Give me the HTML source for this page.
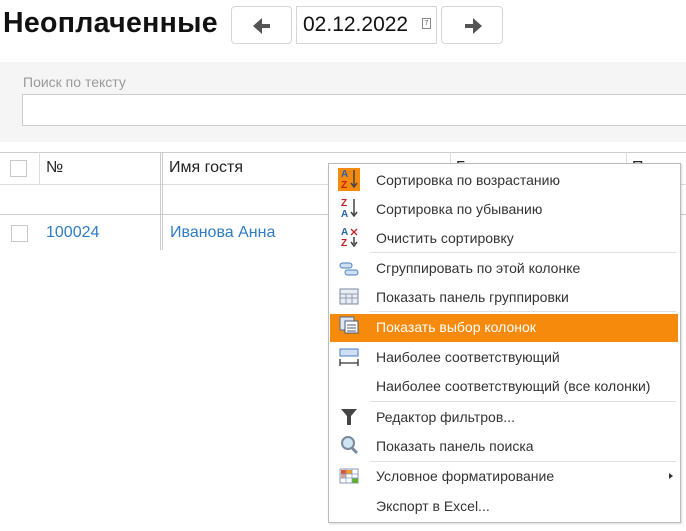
<!DOCTYPE html>
<html><head><meta charset="utf-8"><style>
*{box-sizing:border-box;margin:0;padding:0}
body{width:686px;height:531px;overflow:hidden;background:#fff;font-family:"Liberation Sans","DejaVu Sans",sans-serif;position:relative;color:#222}
.a{position:absolute}
.btn{border:1px solid #d6d6d6;border-radius:4px;background:#fff}
.cb{width:17px;height:17px;border:1px solid #c8c8c8;background:#fff;position:absolute}
.mi{position:absolute;left:376px;font-size:14px;color:#333;line-height:18px}
.sep{position:absolute;left:370px;width:306px;height:1px;background:#e0e0e0}
.ic{position:absolute;left:338px}
</style></head><body>
<div class="a" style="left:3px;top:7px;font-size:28.5px;font-weight:bold;color:#111;letter-spacing:.3px">Неоплаченные</div>
<div class="a btn" style="left:231px;top:6px;width:61px;height:38px"><svg width="61" height="38"><path d="M23 19h15" stroke="#555" stroke-width="4"/><path d="M21 19l9-8v16z" fill="#555"/></svg></div>
<div class="a" style="left:296px;top:6px;width:141px;height:38px;border:1px solid #d6d6d6;background:#fff"><span class="a" style="left:6px;top:6px;font-size:21px;color:#111">02.12.2022</span><span class="a" style="left:125px;top:11px;width:9px;height:11px;border:1px solid #888;font-size:7px;text-align:center;line-height:9px;color:#555">7</span></div>
<div class="a btn" style="left:441px;top:6px;width:62px;height:38px"><svg width="62" height="38"><path d="M23 19h15" stroke="#555" stroke-width="4"/><path d="M40 19l-9-8v16z" fill="#555"/></svg></div>
<div class="a" style="left:0;top:62px;width:686px;height:80px;background:#f5f5f5"></div>
<div class="a" style="left:23px;top:74px;font-size:14px;color:#999">Поиск по тексту</div>
<div class="a" style="left:22px;top:94px;width:670px;height:32px;border:1px solid #ccc;background:#fff"></div>
<!-- table -->
<div class="a" style="left:0;top:152px;width:686px;height:1px;background:#ccc"></div>
<div class="a" style="left:0;top:184px;width:686px;height:1px;background:#ddd"></div>
<div class="a" style="left:0;top:214px;width:686px;height:1px;background:#ccc"></div>
<div class="a" style="left:39px;top:152px;width:1px;height:32px;background:#ddd"></div>
<div class="a" style="left:160px;top:152px;width:1px;height:98px;background:#ccc"></div>
<div class="a" style="left:162px;top:152px;width:1px;height:98px;background:#ccc"></div>
<div class="a" style="left:450px;top:152px;width:1px;height:32px;background:#ddd"></div>
<div class="a" style="left:626px;top:152px;width:1px;height:32px;background:#ddd"></div>
<div class="cb" style="left:10px;top:160px"></div>
<div class="a" style="left:46px;top:159px;font-size:16px">№</div>
<div class="a" style="left:169px;top:159px;font-size:16px">Имя гостя</div>
<div class="a" style="left:456px;top:159px;font-size:16px">Гость</div>
<div class="a" style="left:632px;top:159px;font-size:16px">Пол</div>
<div class="cb" style="left:11px;top:225px"></div>
<div class="a" style="left:46px;top:224px;font-size:16px;color:#2f7bc4">100024</div>
<div class="a" style="left:170px;top:224px;font-size:16px;color:#2f7bc4">Иванова Анна</div>
<!-- menu -->
<div class="a" style="left:328px;top:163px;width:353px;height:360px;background:#fff;border:1px solid #bbb;box-shadow:1px 1px 2px rgba(0,0,0,.15)"></div>
<div class="a" style="left:330px;top:314px;width:348px;height:28px;background:#f68a0d"></div>
<div class="sep" style="top:252px"></div><div class="sep" style="top:311px"></div><div class="sep" style="top:401px"></div><div class="sep" style="top:461px"></div>
<div class="ic" style="top:168px;width:22px;height:23px;background:#f68a0d"></div>
<svg class="a" style="left:338px;top:167px" width="24" height="340" font-family="Liberation Sans" font-weight="bold" font-size="10">
<text x="3" y="10" fill="#2a62b0">A</text><text x="3" y="21" fill="#c02020">Z</text><path d="M16 3v16M13 16l3 4 3-4" stroke="#444" stroke-width="1.5" fill="none"/>
<text x="3" y="39" fill="#c02020">Z</text><text x="3" y="50" fill="#2a62b0">A</text><path d="M16 32v16M13 45l3 4 3-4" stroke="#444" stroke-width="1.5" fill="none"/>
<text x="3" y="68" fill="#2a62b0">A</text><text x="3" y="79" fill="#c02020">Z</text><path d="M13 62l6 6M19 62l-6 6" stroke="#c02020" stroke-width="1.3"/><path d="M16 70v7M13 75l3 4 3-4" stroke="#444" stroke-width="1.5" fill="none"/>
<rect x="2" y="96" width="12" height="5" rx="2.5" fill="#cfe0f5" stroke="#4a7ec0"/><rect x="7" y="103" width="13" height="5" rx="2.5" fill="#cfe0f5" stroke="#4a7ec0"/>
<rect x="2" y="122" width="18" height="15" fill="#e8eef6" stroke="#7a8aa0"/><path d="M2 127h18M2 131h18M8 127v10M14 127v10" stroke="#99a"/>
<rect x="2" y="150" width="14" height="13" fill="#dde6f2" stroke="#5a6c88"/><rect x="7" y="154" width="13" height="12" fill="#fff" stroke="#4a5a74"/><path d="M9 158h9M9 161h9M9 164h9" stroke="#4a5a74"/>
<rect x="2" y="182" width="18" height="7" fill="#cfe0f5" stroke="#4a7ec0"/><path d="M2 196h18M2 192v7M20 192v7" stroke="#333" stroke-width="1.3"/>
<path d="M3 242h16l-6 7v9h-4v-9z" fill="#444"/>
<circle cx="10" cy="276" r="6" fill="#cfe4f5" stroke="#7a8a9a" stroke-width="2"/><path d="M14 281l5 5" stroke="#7a8a9a" stroke-width="3"/>
<rect x="2" y="302" width="18" height="14" fill="#fff" stroke="#8899bb"/><rect x="3" y="303" width="5" height="4" fill="#e05030"/><rect x="8" y="303" width="6" height="4" fill="#f0a020"/><rect x="3" y="307" width="5" height="4" fill="#e0a090"/><rect x="14" y="311" width="6" height="5" fill="#60b030"/><path d="M2 307h18M2 311h18M8 302v14M14 302v14" stroke="#8899bb" stroke-width=".8"/>
</svg>
<div class="mi" style="top:171px">Сортировка по возрастанию</div>
<div class="mi" style="top:200px">Сортировка по убыванию</div>
<div class="mi" style="top:229px">Очистить сортировку</div>
<div class="mi" style="top:259px">Сгруппировать по этой колонке</div>
<div class="mi" style="top:288px">Показать панель группировки</div>
<div class="mi" style="top:318px;color:#fff">Показать выбор колонок</div>
<div class="mi" style="top:348px">Наиболее соответствующий</div>
<div class="mi" style="top:377px">Наиболее соответствующий (все колонки)</div>
<div class="mi" style="top:408px">Редактор фильтров...</div>
<div class="mi" style="top:437px">Показать панель поиска</div>
<div class="mi" style="top:467px">Условное форматирование</div>
<div class="a" style="left:669px;top:473px;width:0;height:0;border-left:4px solid #333;border-top:3px solid transparent;border-bottom:3px solid transparent"></div>
<div class="mi" style="top:497px">Экспорт в Excel...</div>
</body></html>
